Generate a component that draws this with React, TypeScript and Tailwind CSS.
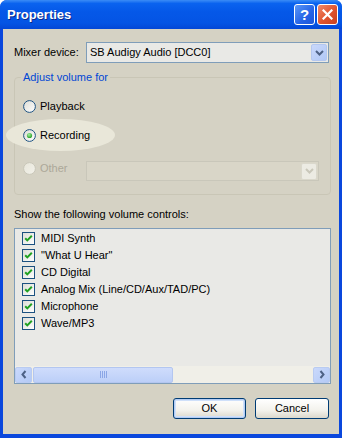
import React from 'react'

const font = { fontFamily: '"Liberation Sans", Arial, sans-serif' }

function Radio({ checked, disabled }: { checked?: boolean; disabled?: boolean }) {
  return (
    <svg width="13" height="13" viewBox="0 0 13 13" className="shrink-0">
      <defs>
        <linearGradient id={disabled ? 'rgd' : 'rg'} x1="0" y1="0" x2="1" y2="1">
          <stop offset="0" stopColor={disabled ? '#e8e6da' : '#dcdcd5'} />
          <stop offset="1" stopColor={disabled ? '#f2f1ea' : '#ffffff'} />
        </linearGradient>
        <radialGradient id="rdot" cx="0.4" cy="0.35" r="0.7">
          <stop offset="0" stopColor="#a6f2a2" />
          <stop offset="1" stopColor="#1f9a1f" />
        </radialGradient>
      </defs>
      <circle cx="6.5" cy="6.5" r="5.9" fill={`url(#${disabled ? 'rgd' : 'rg'})`} stroke={disabled ? '#c8c6b8' : '#1c5180'} strokeWidth="1" />
      {checked && <circle cx="6.5" cy="6.5" r="2.6" fill="url(#rdot)" />}
    </svg>
  )
}

function Check() {
  return (
    <svg width="13" height="13" viewBox="0 0 13 13" className="shrink-0">
      <defs>
        <linearGradient id="cg" x1="0" y1="0" x2="1" y2="1">
          <stop offset="0" stopColor="#dcdcd5" />
          <stop offset="1" stopColor="#ffffff" />
        </linearGradient>
      </defs>
      <rect x="0.5" y="0.5" width="12" height="12" fill="url(#cg)" stroke="#1c5180" />
      <path d="M3.2 6.2 L5.3 8.4 L9.8 3.8" fill="none" stroke="#21a121" strokeWidth="2" />
    </svg>
  )
}

function DropButton({ disabled }: { disabled?: boolean }) {
  return (
    <div
      className={
        disabled
          ? 'w-[16px] h-[17px] rounded-[2px] bg-[#ecebe3] border border-[#dad8cc] flex items-center justify-center'
          : 'w-[16px] h-[17px] rounded-[2px] bg-[linear-gradient(135deg,#c9d8fb,#b1c8f6)] border border-[#b4c7f0] flex items-center justify-center'
      }
    >
      <svg width="9" height="6" viewBox="0 0 9 6">
        <path d="M1 1 L4.5 4.5 L8 1" fill="none" stroke={disabled ? '#c9c7ba' : '#4d6185'} strokeWidth="2" />
      </svg>
    </div>
  )
}

function ScrollArrow({ dir }: { dir: 'left' | 'right' }) {
  return (
    <div className="w-[17px] h-[16px] rounded-[2px] bg-[linear-gradient(135deg,#cad9fc,#b3c9f5)] border border-[#b9cbf1] flex items-center justify-center">
      <svg width="6" height="9" viewBox="0 0 6 9">
        <path d={dir === 'left' ? 'M4.5 1 L1.5 4.5 L4.5 8' : 'M1.5 1 L4.5 4.5 L1.5 8'} fill="none" stroke="#4d6185" strokeWidth="2" />
      </svg>
    </div>
  )
}

const items = ['MIDI Synth', '"What U Hear"', 'CD Digital', 'Analog Mix (Line/CD/Aux/TAD/PC)', 'Microphone', 'Wave/MP3']

export default function App() {
  return (
    <div className="w-[342px] h-[438px] bg-white text-[11px] text-black" style={font}>
      <div className="w-full h-full flex flex-col rounded-t-[7px] bg-[#0a47dd] overflow-hidden">
        {/* Title bar */}
        <div className="h-[29px] shrink-0 flex items-center pl-[7px] pr-[4px] bg-[linear-gradient(180deg,#3b8cf6_0%,#0a63ef_12%,#0558e8_40%,#0454e4_80%,#0347d6_100%)]">
          <span className="text-white font-bold text-[13px] [text-shadow:1px_1px_0_#0b2a8c] flex-1">Properties</span>
          <div className="flex gap-[2px]">
            <div className="w-[21px] h-[21px] rounded-[3px] border border-white bg-[linear-gradient(135deg,#5b97f7,#2563e6_60%,#1c55d9)] flex items-center justify-center text-white font-bold text-[15px] leading-none">
              ?
            </div>
            <div className="w-[21px] h-[21px] rounded-[3px] border border-white bg-[linear-gradient(135deg,#f08a6a,#e0532e_55%,#c8401e)] flex items-center justify-center">
              <svg width="11" height="11" viewBox="0 0 11 11">
                <path d="M1.5 1.5 L9.5 9.5 M9.5 1.5 L1.5 9.5" stroke="white" strokeWidth="2.2" strokeLinecap="square" />
              </svg>
            </div>
          </div>
        </div>

        {/* Client area */}
        <div className="relative flex-1 mx-[3px] mb-[4px] bg-[#d5d2c4] flex flex-col pl-[11px] pr-[8px]">
          {/* highlight around Recording */}
          <div className="absolute left-[3px] top-[90px] w-[109px] h-[32px] rounded-[50%] bg-[#e9e7d9]" />

          {/* Mixer device */}
          <div className="mt-[13px] h-[21px] flex items-center">
            <span className="w-[72px] shrink-0">Mixer device:</span>
            <div className="w-[243px] h-[21px] border border-[#7f9db9] bg-[#e9e9e6] flex items-center justify-between pl-[3px] pr-[1px]">
              <span>SB Audigy Audio [DCC0]</span>
              <DropButton />
            </div>
          </div>

          {/* Adjust volume for */}
          <fieldset className="mt-[8px] border border-[#c9c6b6] rounded-[4px] pb-[13px]">
            <legend className="ml-[6px] px-[2px] text-[#0046d5] leading-[13px]">Adjust volume for</legend>
            <div className="pt-[14px] pl-[8px] flex flex-col">
              <div className="relative h-[17px] flex items-center gap-[4px]">
                <Radio />
                <span>Playback</span>
              </div>
              <div className="relative mt-[12px] h-[17px] flex items-center gap-[4px]">
                <Radio checked />
                <span>Recording</span>
              </div>
              <div className="relative mt-[16px] flex items-start">
                <div className="w-[63px] h-[17px] flex items-center gap-[4px]">
                  <Radio disabled />
                  <span className="text-[#aca899]">Other</span>
                </div>
                <div className="mt-[1px] w-[233px] h-[20px] border border-[#c9c7ba] bg-[#d9d6c8] flex items-center justify-end pr-[1px]">
                  <DropButton disabled />
                </div>
              </div>
            </div>
          </fieldset>

          <div className="mt-[13px] h-[13px] leading-[13px]">Show the following volume controls:</div>

          {/* List */}
          <div className="mt-[7px] h-[156px] border border-[#7f9db9] bg-[#e9e9e6] flex flex-col">
            <div className="pt-[1px] pl-[7px] flex flex-col">
              {items.map((it) => (
                <div key={it} className="h-[17px] flex items-center gap-[6px]">
                  <Check />
                  <span>{it}</span>
                </div>
              ))}
            </div>
            <div className="mt-auto h-[17px] flex items-center bg-[#f0efe8]">
              <ScrollArrow dir="left" />
              <div className="ml-[1px] w-[140px] h-[16px] rounded-[2px] bg-[linear-gradient(180deg,#cfdcfc,#bccff8)] border border-[#b3c6f0] flex items-center justify-center gap-[1px]">
                {[0, 1, 2, 3].map((i) => (
                  <div key={i} className="w-[1px] h-[7px] bg-[#8aa6e6]" />
                ))}
              </div>
              <div className="flex-1" />
              <ScrollArrow dir="right" />
            </div>
          </div>

          {/* Buttons */}
          <div className="mt-[14px] flex justify-end gap-[9px] mr-[2px]">
            <div className="w-[73px] h-[21px] rounded-[3px] border border-[#003c74] bg-[linear-gradient(180deg,#ffffff,#f3f2ec_60%,#dcd8cc)] flex items-center justify-center shadow-[inset_0_0_0_1px_#b5cdf3,inset_0_0_0_2px_#cfe0fa]">
              OK
            </div>
            <div className="w-[74px] h-[21px] rounded-[3px] border border-[#003c74] bg-[linear-gradient(180deg,#ffffff,#f3f2ec_60%,#dcd8cc)] flex items-center justify-center">
              Cancel
            </div>
          </div>
        </div>
      </div>
    </div>
  )
}
